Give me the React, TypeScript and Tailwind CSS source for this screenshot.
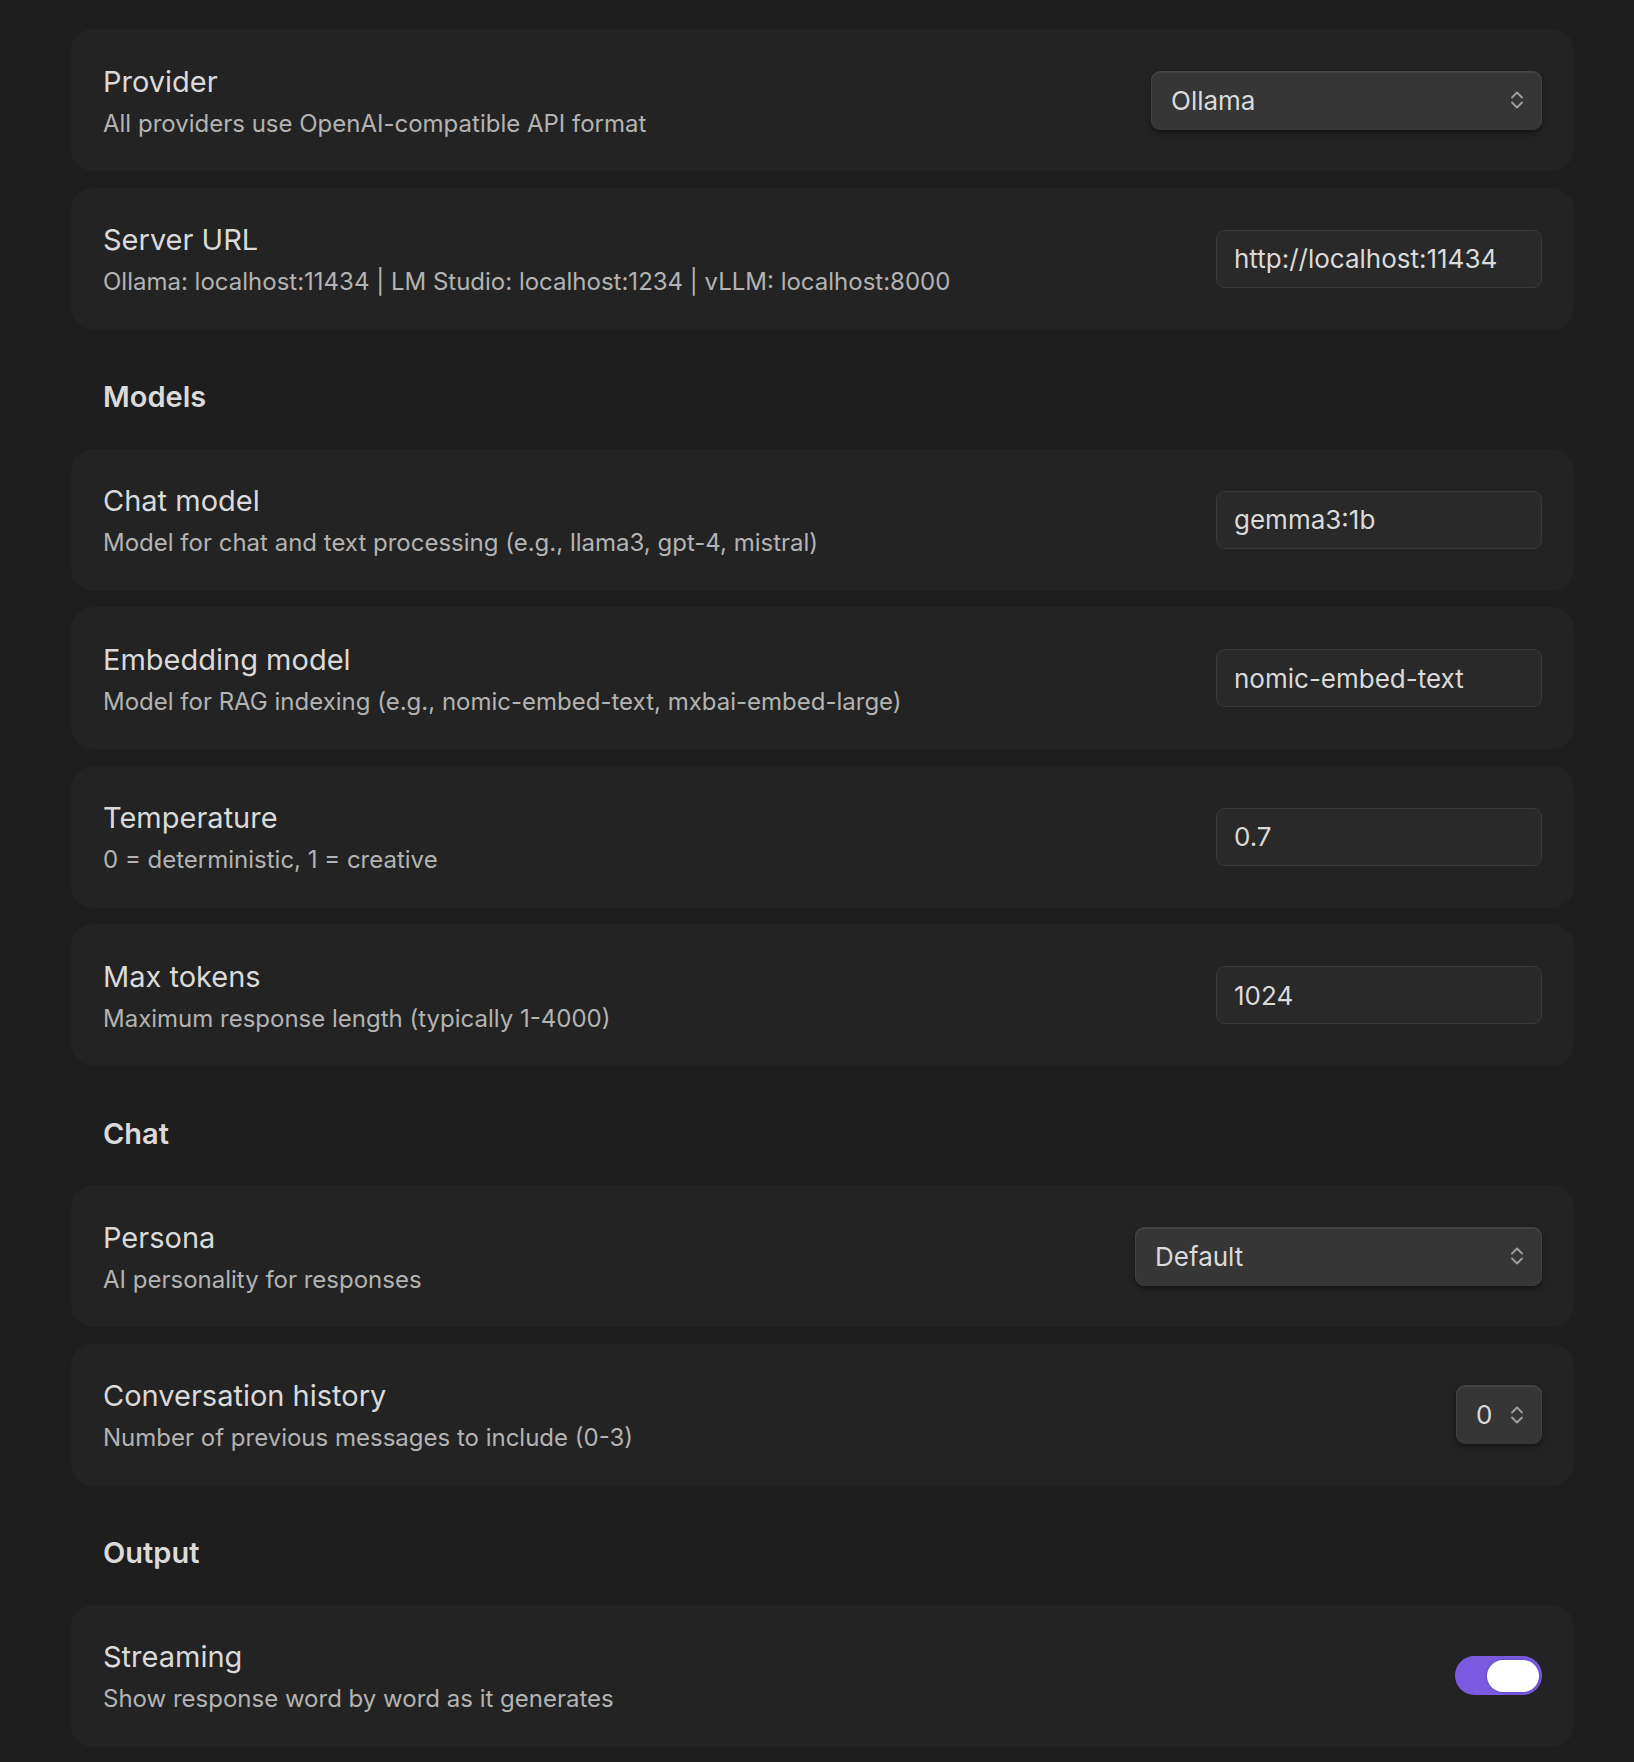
import { useState } from "react"

type Control =
  | { kind: "select"; value: string; width: string }
  | { kind: "input"; value: string }
  | { kind: "toggle"; on: boolean }

type Setting = {
  name: string
  desc: string
  control: Control
}

type Section = {
  heading?: string
  items: Setting[]
}

const sections: Section[] = [
  {
    items: [
      {
        name: "Provider",
        desc: "All providers use OpenAI-compatible API format",
        control: { kind: "select", value: "Ollama", width: "w-[391px]" },
      },
      {
        name: "Server URL",
        desc: "Ollama: localhost:11434 | LM Studio: localhost:1234 | vLLM: localhost:8000",
        control: { kind: "input", value: "http://localhost:11434" },
      },
    ],
  },
  {
    heading: "Models",
    items: [
      {
        name: "Chat model",
        desc: "Model for chat and text processing (e.g., llama3, gpt-4, mistral)",
        control: { kind: "input", value: "gemma3:1b" },
      },
      {
        name: "Embedding model",
        desc: "Model for RAG indexing (e.g., nomic-embed-text, mxbai-embed-large)",
        control: { kind: "input", value: "nomic-embed-text" },
      },
      {
        name: "Temperature",
        desc: "0 = deterministic, 1 = creative",
        control: { kind: "input", value: "0.7" },
      },
      {
        name: "Max tokens",
        desc: "Maximum response length (typically 1-4000)",
        control: { kind: "input", value: "1024" },
      },
    ],
  },
  {
    heading: "Chat",
    items: [
      {
        name: "Persona",
        desc: "AI personality for responses",
        control: { kind: "select", value: "Default", width: "w-[407px]" },
      },
      {
        name: "Conversation history",
        desc: "Number of previous messages to include (0-3)",
        control: { kind: "select", value: "0", width: "w-[86px]" },
      },
    ],
  },
  {
    heading: "Output",
    items: [
      {
        name: "Streaming",
        desc: "Show response word by word as it generates",
        control: { kind: "toggle", on: true },
      },
    ],
  },
]

function UpDown() {
  return (
    <svg width="14" height="20" viewBox="0 0 14 20" fill="none" stroke="#a0a0a0" strokeWidth="1.8" strokeLinecap="round" strokeLinejoin="round">
      <path d="M2 7.5 7 2.5l5 5" />
      <path d="M2 12.5l5 5 5-5" />
    </svg>
  )
}

function Dropdown({ value, width }: { value: string; width: string }) {
  return (
    <div
      className={`${width} h-[59px] flex items-center justify-between rounded-[9px] bg-[#363636] pl-[20px] pr-[18px] text-[26px] text-[#dadada] shadow-[inset_0_1px_1px_1px_rgba(255,255,255,0.07),0_3px_6px_rgba(0,0,0,0.25),0_2px_3px_rgba(0,0,0,0.2)]`}
    >
      <span>{value}</span>
      <UpDown />
    </div>
  )
}

function TextInput({ value }: { value: string }) {
  return (
    <div className="w-[326px] h-[58px] flex items-center rounded-[9px] border border-[#3a3a3a] bg-[#292929] pl-[17px] text-[26px] text-[#dadada]">
      {value}
    </div>
  )
}

function Toggle({ initial }: { initial: boolean }) {
  const [on, setOn] = useState(initial)
  return (
    <button
      onClick={() => setOn(!on)}
      className={`w-[87px] h-[39px] rounded-full flex items-center px-[3px] ${on ? "bg-[#7a5ae0] justify-end" : "bg-[#3f3f3f] justify-start"}`}
    >
      <span className="w-[52px] h-[32px] rounded-full bg-white shadow-[0_0_3px_rgba(0,0,0,0.3)]" />
    </button>
  )
}

function SettingRow({ item }: { item: Setting }) {
  const c = item.control
  return (
    <div className="h-[142px] flex items-center justify-between rounded-[22px] bg-[#232323] pl-[32px] pr-[32px]">
      <div className="pt-[2px]">
        <div className="text-[29px] leading-[35px] text-[#dadada]">{item.name}</div>
        <div className="mt-[10px] text-[24px] leading-[30px] text-[#b3b3b3]">{item.desc}</div>
      </div>
      {c.kind === "select" && <Dropdown value={c.value} width={c.width} />}
      {c.kind === "input" && <TextInput value={c.value} />}
      {c.kind === "toggle" && <Toggle initial={c.on} />}
    </div>
  )
}

export default function App() {
  return (
    <div
      className="min-h-[1762px] bg-[#1e1e1e] pt-[29px] pb-[15px]"
      style={{ fontFamily: "Inter, 'Noto Sans', sans-serif" }}
    >
      <div className="ml-[71px] w-[1503px] flex flex-col gap-[16.5px]">
        {sections.map((section, i) => (
          <div key={i} className="contents">
            {section.heading && (
              <div className="pt-[33px] pb-[18px] pl-[32px] text-[29px] leading-[35px] font-semibold text-[#dadada]">
                {section.heading}
              </div>
            )}
            {section.items.map((item) => (
              <SettingRow key={item.name} item={item} />
            ))}
          </div>
        ))}
      </div>
    </div>
  )
}
